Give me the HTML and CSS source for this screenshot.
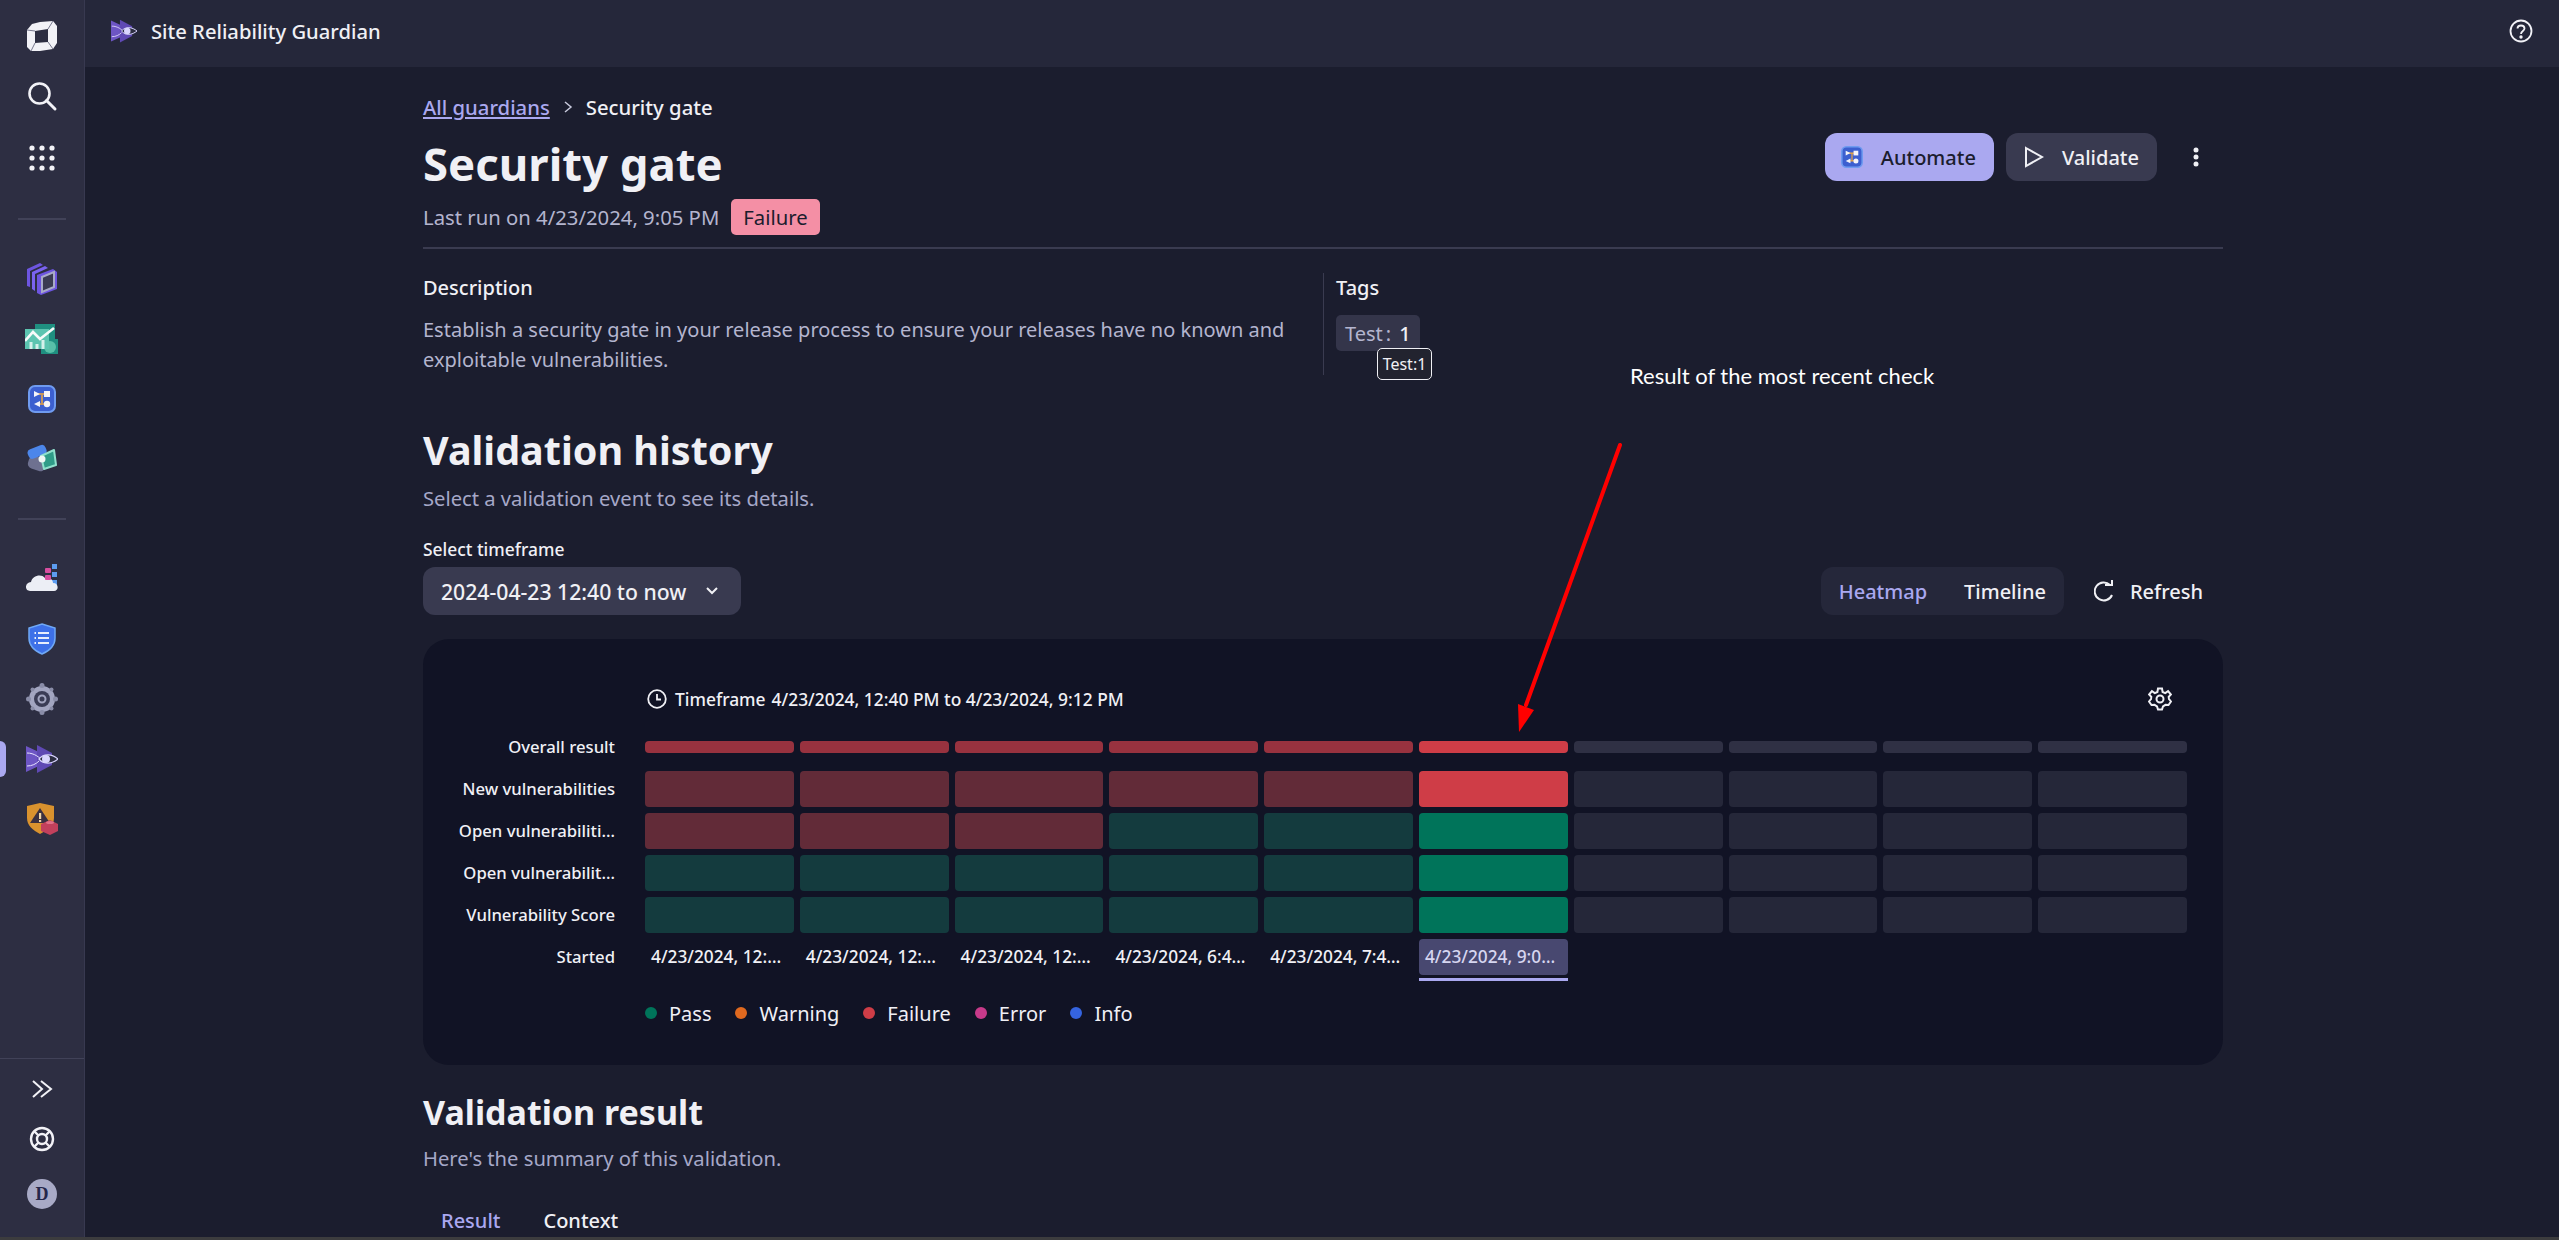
FILE: index.html
```html
<!DOCTYPE html>
<html lang="en">
<head>
    <meta charset="UTF-8">
    <title>Site Reliability Guardian</title>
    <link rel="stylesheet" href="styles.css">
</head>
<body>
    <svg class="defs" width="0" height="0">
        <symbol id="guardian" viewBox="0 0 32 28">
            <polygon points="0,1 15,8 15,20 0,27" fill="#6d55c4"/>
            <polygon points="11,0 26,8 26,20 11,28" fill="#5f49b4"/>
            <path d="M1 8C8 8 14 12 18 18M1 21C6 21 10 19 13 16" fill="none" stroke="#e6e2ff" stroke-width="1"/>
            <path d="M13 14C18 8 26 9 32 14C26 19 18 20 13 14Z" fill="#2d2e42" stroke="#d9d5ff" stroke-width="1.2"/>
            <circle cx="20" cy="14" r="4" fill="#d9d5ff"/>
        </symbol>
        <symbol id="automate" viewBox="0 0 28 28">
            <rect x="1" y="1" width="26" height="26" rx="6" fill="#3c5fd0" stroke="#6f9bf0" stroke-width="2"/>
            <path d="M9 9H18M14 10V18M11 19H18" stroke="#f0a63a" stroke-width="1.5" fill="none"/>
            <polygon points="6,6 12,9 6,12" fill="#f4f4fa"/>
            <rect x="16" y="6" width="6" height="6" fill="#f4f4fa"/>
            <polygon points="12,16 6,19 12,22" fill="#f4f4fa"/>
            <circle cx="19" cy="19" r="3.2" fill="#f4f4fa"/>
        </symbol>
    </svg>

    <div class="app">
        <nav class="sidebar">
            <div class="side-group top">
                <a class="side-item">
                    <svg width="32" height="32" viewBox="0 0 32 32"><path d="M6 4 14 2 27 1 31 6 31 23 27 29 14 31 5 31 1 27 1 10Z" fill="#f2f2f7"/><path d="M9 11 22 9 22 22 9 23Z" fill="#2d2e42"/><path d="M22 9 27 1M22 22 27 29M9 23 5 31M9 11 1 10" stroke="#77788e" stroke-width="1"/></svg>
                </a>
                <a class="side-item">
                    <svg width="32" height="32" viewBox="0 0 32 32"><circle cx="13.5" cy="13.5" r="10" fill="none" stroke="#f2f2f7" stroke-width="2.6"/><path d="M20.5 20.5 29 29" stroke="#f2f2f7" stroke-width="3" stroke-linecap="round"/></svg>
                </a>
                <a class="side-item apps">
                    <svg width="32" height="32" viewBox="0 0 32 32" fill="#f2f2f7"><circle cx="6" cy="6" r="2.6"/><circle cx="16" cy="6" r="2.6"/><circle cx="26" cy="6" r="2.6"/><circle cx="6" cy="16" r="2.6"/><circle cx="16" cy="16" r="2.6"/><circle cx="26" cy="16" r="2.6"/><circle cx="6" cy="26" r="2.6"/><circle cx="16" cy="26" r="2.6"/><circle cx="26" cy="26" r="2.6"/></svg>
                </a>
            </div>
            <div class="side-rule"></div>
            <div class="side-group">
                <a class="side-item">
                    <svg width="32" height="34" viewBox="0 0 32 34"><path d="M1 7 14 1 17 3 4 9 4 25 1 24Z" fill="#6d55e0"/><path d="M6 10 19 4 22 6 9 12 9 29 6 27Z" fill="#7a63f0"/><path d="M11 13 27 7 31 10 31 27 15 33 11 31Z" fill="#6d55e0"/><path d="M16 15 28 10 28 25 16 30Z" fill="#3a3b52" stroke="#a8aac8" stroke-width="2"/></svg>
                </a>
                <a class="side-item">
                    <svg width="34" height="32" viewBox="0 0 34 32"><rect x="10" y="1" width="20" height="16" fill="#1f8f80"/><rect x="16" y="16" width="17" height="15" fill="#1f8f80"/><circle cx="25" cy="24" r="6" fill="#58c0a8"/><rect x="0" y="6" width="24" height="20" fill="#5cc4b0"/><path d="M0 18 8 9 15 16 29 5" fill="none" stroke="#f7fbfa" stroke-width="2.6"/><path d="M6 19V26M12 21V26M18 17V26" stroke="#d4f0ea" stroke-width="3"/></svg>
                </a>
                <a class="side-item">
                    <svg width="28" height="28"><use href="#automate"/></svg>
                </a>
                <a class="side-item">
                    <svg width="30" height="30" viewBox="0 0 30 30"><rect x="1" y="13" width="18" height="13" rx="5" fill="#6e7190" transform="rotate(18 10 20)"/><rect x="1" y="3" width="19" height="10" rx="4" fill="#4c86ea" transform="rotate(-22 10 9)"/><path d="M14 12 27 6 29 21 17 25Z" fill="#2f9c88" stroke="#8fe0cc" stroke-width="2" stroke-linejoin="round"/><circle cx="15" cy="15" r="3.5" fill="#eef6f4"/></svg>
                </a>
            </div>
            <div class="side-rule"></div>
            <div class="side-group">
                <a class="side-item">
                    <svg width="32" height="30" viewBox="0 0 32 30"><rect x="26" y="0" width="5" height="5" fill="#5c9cf0"/><rect x="26" y="8" width="5" height="5" fill="#5c9cf0"/><rect x="26" y="16" width="5" height="5" fill="#5c9cf0"/><path d="M4 27C-2 27-1 18 5 18 6 12 15 9 19 14 24 13 27 16 27 19 33 19 33 27 28 27Z" fill="#eceef5"/><rect x="19" y="4" width="6" height="5" rx="1" fill="#d84ea0"/><rect x="19" y="11" width="6" height="5" rx="1" fill="#d84ea0"/></svg>
                </a>
                <a class="side-item">
                    <svg width="28" height="32" viewBox="0 0 28 32"><path d="M14 1 27 5V15C27 23 21 28 14 31 7 28 1 23 1 15V5Z" fill="#3d70e8" stroke="#6fa8f5" stroke-width="1.5"/><path d="M10 10H21M10 15H21M10 20H21" stroke="#e8eefc" stroke-width="2"/><path d="M6.5 10H8M6.5 15H8M6.5 20H8" stroke="#e8eefc" stroke-width="2"/></svg>
                </a>
                <a class="side-item">
                    <svg width="32" height="32" viewBox="0 0 32 32"><circle cx="16" cy="16" r="13" fill="#a2a5c0"/><circle cx="16" cy="16" r="8" fill="#3a3c55"/><circle cx="16" cy="16" r="3.5" fill="none" stroke="#a2a5c0" stroke-width="2"/><g fill="#8a8da8"><circle cx="16" cy="2.5" r="2.5"/><circle cx="16" cy="29.5" r="2.5"/><circle cx="2.5" cy="16" r="2.5"/><circle cx="29.5" cy="16" r="2.5"/><circle cx="6.5" cy="6.5" r="2"/><circle cx="25.5" cy="6.5" r="2"/><circle cx="6.5" cy="25.5" r="2"/><circle cx="25.5" cy="25.5" r="2"/></g></svg>
                </a>
                <a class="side-item active">
                    <svg width="32" height="28"><use href="#guardian"/></svg>
                </a>
                <a class="side-item">
                    <svg width="32" height="32" viewBox="0 0 32 32"><path d="M1 3 14 0 28 3V15C28 23 21 27 14 31 7 27 1 23 1 15Z" fill="#d9922e"/><polygon points="14,5 24,20 4,20" fill="#3a3040"/><rect x="13" y="10" width="2.2" height="6" fill="#f0d8a8"/><rect x="13" y="17" width="2.2" height="2" fill="#f0d8a8"/><path d="M15 21 24 17 32 21V28L24 32 15 28Z" fill="#c2405c"/><ellipse cx="24" cy="19.500" rx="4" ry="1.600" fill="#e07088"/></svg>
                </a>
            </div>
            <div class="side-bottom">
                <a class="side-item small">
                    <svg width="24" height="24" viewBox="0 0 24 24" fill="none" stroke="#f2f2f7" stroke-width="2"><path d="M3 4 12 12 3 20M11 4 21 12 11 20"/></svg>
                </a>
                <a class="side-item small">
                    <svg width="26" height="26" viewBox="0 0 26 26" fill="none" stroke="#f2f2f7" stroke-width="2.4"><circle cx="13" cy="13" r="11"/><circle cx="13" cy="13" r="5"/><path d="M5 5 9.5 9.5M21 5 16.500 9.500M5 21 9.500 16.500M21 21 16.500 16.500"/></svg>
                </a>
                <div class="avatar">D</div>
            </div>
        </nav>

        <div class="main">
            <header class="topbar">
                <svg width="26" height="24"><use href="#guardian"/></svg>
                <span class="app-name">Site Reliability Guardian</span>
                <svg class="help" width="24" height="24" viewBox="0 0 24 24" fill="none" stroke="#f2f2f7" stroke-width="1.8"><circle cx="12" cy="12" r="10.500"/><path d="M8.500 9.500C8.500 5.500 15.500 5.500 15.500 9.500 15.500 12 12 12 12 15"/><circle cx="12" cy="18" r="0.800" fill="#f2f2f7"/></svg>
            </header>

            <main class="content">
                <div class="breadcrumb">
                    <a class="link">All guardians</a>
                    <svg width="10" height="14" viewBox="0 0 10 14" fill="none" stroke="#c8c9dc" stroke-width="1.500"><path d="M2 2 8 7 2 12"/></svg>
                    <span>Security gate</span>
                </div>

                <div class="page-head">
                    <h1>Security gate</h1>
                    <div class="actions">
                        <button class="btn primary"><svg width="22" height="22"><use href="#automate"/></svg>Automate</button>
                        <button class="btn"><svg width="20" height="22" viewBox="0 0 20 22" fill="none" stroke="#f0f0f5" stroke-width="2"><path d="M2 2 18 11 2 20Z"/></svg>Validate</button>
                        <svg class="kebab" width="6" height="20" viewBox="0 0 6 20" fill="#f0f0f5"><circle cx="3" cy="3" r="2.500"/><circle cx="3" cy="10" r="2.500"/><circle cx="3" cy="17" r="2.500"/></svg>
                    </div>
                </div>

                <div class="last-run">
                    <span>Last run on 4/23/2024, 9:05 PM</span>
                    <span class="badge">Failure</span>
                </div>

                <section class="meta">
                    <div class="meta-desc">
                        <h3>Description</h3>
                        <p>Establish a security gate in your release process to ensure your releases have no known and exploitable vulnerabilities.</p>
                    </div>
                    <div class="meta-tags">
                        <h3>Tags</h3>
                        <div class="chip">Test<i>:</i><b>1</b><span class="tooltip">Test:1</span></div>
                    </div>
                </section>

                <h2 class="history-title">Validation history</h2>
                <p class="muted history-sub">Select a validation event to see its details.</p>
                <label class="tf-label">Select timeframe</label>

                <div class="toolbar">
                    <button class="select">2024-04-23 12:40 to now
                        <svg width="14" height="10" viewBox="0 0 14 10" fill="none" stroke="#f0f0f5" stroke-width="2"><path d="M2 2 7 7 12 2"/></svg>
                    </button>
                    <div class="view-controls">
                        <div class="segment">
                            <span class="seg on">Heatmap</span>
                            <span class="seg">Timeline</span>
                        </div>
                        <button class="refresh">
                            <svg width="20" height="22" viewBox="0 0 20 22" fill="none" stroke="#f0f0f5" stroke-width="2"><path d="M16 5A9 9 0 1 0 18 15"/><path d="M11 5H18V0"/></svg>
                            Refresh
                        </button>
                    </div>
                </div>

                <section class="panel">
                    <div class="panel-head">
                        <div class="timeframe">
                            <svg width="20" height="20" viewBox="0 0 20 20" fill="none" stroke="#f0f0f5" stroke-width="1.800"><circle cx="10" cy="10" r="8.800"/><path d="M10 5V10.500H14"/></svg>
                            <span>Timeframe</span>
                            <span>4/23/2024, 12:40 PM to 4/23/2024, 9:12 PM</span>
                        </div>
                        <svg class="gear" width="24" height="24" viewBox="0 0 24 24" fill="none" stroke="#f0f0f5" stroke-width="2"><path d="M10 1.500H14L14.600 5 17.200 6.100 20.100 4.100 22.900 7.500 20.700 9.800 21 12 23 14.500 20.500 18 17.500 17.800 15 19.500 14 22.500H10L9 19.500 6.500 17.800 3.500 18 1 14.500 3 12 3.300 9.800 1.100 7.500 3.900 4.100 6.800 6.100 9.400 5Z"/><circle cx="12" cy="12" r="3.500"/></svg>
                    </div>

                    <div class="heat-row overall">
                        <div class="row-label">Overall result</div>
                        <div class="cell fail-mid"></div><div class="cell fail-mid"></div><div class="cell fail-mid"></div><div class="cell fail-mid"></div><div class="cell fail-mid"></div>
                        <div class="cell fail-on"></div>
                        <div class="cell empty-mid"></div><div class="cell empty-mid"></div><div class="cell empty-mid"></div><div class="cell empty-mid"></div>
                    </div>
                    <div class="heat-row">
                        <div class="row-label">New vulnerabilities</div>
                        <div class="cell fail"></div><div class="cell fail"></div><div class="cell fail"></div><div class="cell fail"></div><div class="cell fail"></div>
                        <div class="cell fail-on"></div>
                        <div class="cell empty"></div><div class="cell empty"></div><div class="cell empty"></div><div class="cell empty"></div>
                    </div>
                    <div class="heat-row">
                        <div class="row-label">Open vulnerabiliti…</div>
                        <div class="cell fail"></div><div class="cell fail"></div><div class="cell fail"></div><div class="cell pass"></div><div class="cell pass"></div>
                        <div class="cell pass-on"></div>
                        <div class="cell empty"></div><div class="cell empty"></div><div class="cell empty"></div><div class="cell empty"></div>
                    </div>
                    <div class="heat-row">
                        <div class="row-label">Open vulnerabilit…</div>
                        <div class="cell pass"></div><div class="cell pass"></div><div class="cell pass"></div><div class="cell pass"></div><div class="cell pass"></div>
                        <div class="cell pass-on"></div>
                        <div class="cell empty"></div><div class="cell empty"></div><div class="cell empty"></div><div class="cell empty"></div>
                    </div>
                    <div class="heat-row">
                        <div class="row-label">Vulnerability Score</div>
                        <div class="cell pass"></div><div class="cell pass"></div><div class="cell pass"></div><div class="cell pass"></div><div class="cell pass"></div>
                        <div class="cell pass-on"></div>
                        <div class="cell empty"></div><div class="cell empty"></div><div class="cell empty"></div><div class="cell empty"></div>
                    </div>
                    <div class="heat-row started">
                        <div class="row-label">Started</div>
                        <div class="cell stamp">4/23/2024, 12:…</div>
                        <div class="cell stamp">4/23/2024, 12:…</div>
                        <div class="cell stamp">4/23/2024, 12:…</div>
                        <div class="cell stamp">4/23/2024, 6:4…</div>
                        <div class="cell stamp">4/23/2024, 7:4…</div>
                        <div class="cell stamp selected">4/23/2024, 9:0…</div>
                    </div>

                    <div class="legend">
                        <span class="legend-item"><i class="dot d-pass"></i>Pass</span>
                        <span class="legend-item"><i class="dot d-warn"></i>Warning</span>
                        <span class="legend-item"><i class="dot d-fail"></i>Failure</span>
                        <span class="legend-item"><i class="dot d-error"></i>Error</span>
                        <span class="legend-item"><i class="dot d-info"></i>Info</span>
                    </div>
                </section>

                <h2 class="result-title">Validation result</h2>
                <p class="muted result-sub">Here's the summary of this validation.</p>
                <div class="tabs">
                    <span class="tab on">Result</span>
                    <span class="tab">Context</span>
                </div>
            </main>
        </div>
    </div>
    <div class="strip"></div>

    <!-- annotation drawn on top of the screenshot -->
    <div class="note">Result of the most recent check</div>
    <svg class="note-arrow" width="120" height="300" viewBox="0 0 120 300">
        <path d="M108 5 14 265" stroke="#ff0000" stroke-width="4" stroke-linecap="round" fill="none"/>
        <polygon points="7,292 6,264 22,270" fill="#ff0000"/>
    </svg>
</body>
</html>
```

FILE: styles.css
```css
* {
    box-sizing: border-box;
}
html, body {
    margin: 0;
    padding: 0;
    height: 1240px;
    overflow: hidden;
}
body {
    position: relative;
    background-color: #1b1d2e;
    color: #f0f0f5;
    font-family: "Noto Sans", sans-serif;
    font-size: 20px;
}
h1, h2, h3, p {
    margin: 0;
}
button {
    font-family: inherit;
    border: none;
    cursor: pointer;
}
.defs {
    position: absolute;
}
.app {
    display: flex;
    height: 1237px;
}
.strip {
    height: 3px;
    background-color: #3c3c3e;
}

/* left nav */
.sidebar {
    width: 85px;
    flex-shrink: 0;
    display: flex;
    flex-direction: column;
    padding-top: 6px;
    background-color: #2d2e42;
    border-right: 1px solid #383950;
}
.side-group {
    display: flex;
    flex-direction: column;
}
.side-group.top {
    margin-bottom: 1px;
}
.side-item {
    position: relative;
    height: 60px;
    display: flex;
    justify-content: center;
    align-items: center;
}
.side-item.apps {
    margin-top: 2px;
}
.side-item.active::before {
    content: "";
    position: absolute;
    left: 0;
    top: 12px;
    width: 6px;
    height: 36px;
    border-radius: 0 6px 6px 0;
    background-color: #aaa8f0;
}
.side-rule {
    height: 2px;
    margin: 29px 18px;
    background-color: #414258;
}
.side-bottom {
    margin-top: auto;
    padding-top: 5px;
    padding-bottom: 28px;
    border-top: 1px solid #414258;
    display: flex;
    flex-direction: column;
    align-items: center;
}
.side-item.small {
    height: 50px;
    width: 100%;
}
.avatar {
    width: 30px;
    height: 30px;
    margin-top: 15px;
    border-radius: 50%;
    background-color: #a8aac6;
    color: #25274a;
    font-family: "Liberation Serif", serif;
    font-weight: 700;
    font-size: 18px;
    line-height: 30px;
    text-align: center;
}

/* top bar */
.main {
    flex: 1;
    min-width: 0;
}
.topbar {
    height: 67px;
    display: flex;
    align-items: center;
    padding: 0 26px 5px 26px;
    background-color: #25273a;
}
.app-name {
    margin-left: 14px;
    font-size: 20.200px;
    font-weight: 500;
}
.help {
    margin-left: auto;
}

/* page */
.content {
    position: relative;
    width: 1800px;
    margin-left: 338px;
    padding-top: 26px;
}
.breadcrumb {
    display: flex;
    align-items: center;
    gap: 13px;
    height: 28px;
    font-size: 20.300px;
    font-weight: 500;
}
.link {
    color: #aaa8f0;
    text-decoration: underline;
}
.page-head {
    display: flex;
    justify-content: space-between;
    align-items: flex-start;
    margin-top: 12px;
}
h1 {
    font-size: 45.500px;
    line-height: 60px;
    font-weight: 700;
}
.actions {
    display: flex;
    align-items: center;
    gap: 12px;
    margin-right: 24px;
}
.btn {
    display: flex;
    align-items: center;
    gap: 18px;
    height: 48px;
    padding: 0 18px;
    border-radius: 12px;
    background-color: #393a50;
    color: #f0f0f5;
    font-size: 20px;
    font-weight: 500;
}
.btn.primary {
    background-color: #aaa8f0;
    color: #1b1d2e;
    padding: 0 18px 0 16px;
}
.kebab {
    margin-left: 24px;
}
.last-run {
    display: flex;
    align-items: center;
    gap: 12px;
    height: 36px;
    margin-top: 6px;
    font-size: 20.300px;
    color: #b4b5cf;
}
.badge {
    padding: 0 12px;
    line-height: 36px;
    border-radius: 5px;
    background-color: #f48fa5;
    color: #1b1d2e;
}
.meta {
    display: flex;
    margin-top: 12px;
    padding-top: 24px;
    border-top: 2px solid #3a3b50;
}
.meta h3 {
    font-size: 20px;
    font-weight: 500;
    line-height: 30px;
}
.meta-desc {
    width: 900px;
}
.meta-desc p {
    width: 880px;
    margin-top: 12px;
    line-height: 30px;
    color: #b4b5cf;
}
.meta-tags {
    height: 102px;
    padding-left: 12px;
    border-left: 1px solid #3a3b50;
}
.chip {
    position: relative;
    display: inline-flex;
    align-items: center;
    height: 36px;
    width: 84px;
    margin-top: 12px;
    padding: 0 9px;
    border-radius: 5px;
    background-color: #34354a;
    color: #b4b5cf;
}
.chip i {
    font-style: normal;
    margin: 0 8px 0 3px;
}
.chip b {
    color: #f0f0f5;
    font-weight: 500;
}
.tooltip {
    position: absolute;
    left: 41px;
    top: 33px;
    width: 55px;
    height: 32px;
    border: 1px solid #f0f0f5;
    border-radius: 5px;
    background-color: #22232f;
    color: #f0f0f5;
    font-size: 16px;
    line-height: 30px;
    text-align: center;
}
h2 {
    font-weight: 700;
}
.history-title {
    margin-top: 50px;
    font-size: 39.500px;
    line-height: 50px;
}
.muted {
    color: #a6a8c8;
    line-height: 30px;
    font-size: 20.200px;
}
.history-sub {
    margin-top: 8px;
}
.tf-label {
    display: block;
    margin-top: 24px;
    font-size: 17.400px;
    font-weight: 500;
    line-height: 24px;
}
.toolbar {
    display: flex;
    justify-content: space-between;
    margin-top: 6px;
}
.select {
    display: flex;
    align-items: center;
    gap: 19px;
    height: 48px;
    width: 318px;
    padding: 0 18px;
    border-radius: 12px;
    background-color: #393a50;
    color: #f0f0f5;
    font-size: 21.200px;
    font-weight: 500;
}
.view-controls {
    display: flex;
    align-items: center;
    gap: 12px;
    margin-right: 8px;
}
.segment {
    display: flex;
    gap: 37px;
    height: 48px;
    align-items: center;
    padding: 0 18px;
    border-radius: 12px;
    background-color: #25273a;
    font-weight: 500;
}
.seg.on {
    color: #aaa8f0;
}
.refresh {
    display: flex;
    align-items: center;
    gap: 16px;
    height: 48px;
    padding: 0 12px 0 18px;
    background: none;
    color: #f0f0f5;
    font-size: 20px;
    font-weight: 500;
}

/* heatmap panel */
.panel {
    height: 426px;
    margin-top: 24px;
    padding: 40px 36px 0 0;
    border-radius: 26px;
    background-color: #111325;
}
.panel-head {
    display: flex;
    justify-content: space-between;
    align-items: center;
    height: 40px;
    margin-bottom: 22px;
    padding-left: 224px;
}
.timeframe {
    display: flex;
    align-items: center;
    gap: 6px;
    font-size: 17.400px;
    font-weight: 500;
}
.timeframe svg {
    margin-right: 2px;
}
.gear {
    margin-right: 15px;
}
.heat-row {
    display: flex;
    gap: 6px;
    height: 36px;
    margin-bottom: 6px;
}
.heat-row.overall {
    height: 12px;
    margin-bottom: 18px;
}
.row-label {
    width: 192px;
    margin-right: 24px;
    flex-shrink: 0;
    align-self: center;
    text-align: right;
    font-size: 16.700px;
    font-weight: 500;
    line-height: 24px;
    white-space: nowrap;
}
.cell {
    flex: 0 0 148.800px;
    border-radius: 4px;
}
.fail { background-color: #622b38; }
.fail-mid { background-color: #98323f; }
.fail-on { background-color: #cf3d47; }
.pass { background-color: #143b3e; }
.pass-on { background-color: #00745a; }
.empty { background-color: #252739; }
.empty-mid { background-color: #2f3044; }
.stamp {
    padding-left: 6px;
    font-size: 17.300px;
    line-height: 36px;
    font-weight: 500;
    white-space: nowrap;
    overflow: hidden;
}
.stamp.selected {
    position: relative;
    overflow: visible;
    background-color: #484870;
    color: #d6d6f0;
}
.stamp.selected::after {
    content: "";
    position: absolute;
    left: 0;
    right: 0;
    top: 39px;
    height: 3px;
    background-color: #aaa8f0;
}
.legend {
    display: flex;
    align-items: center;
    gap: 24px;
    height: 30px;
    margin-top: 23px;
    padding-left: 222px;
}
.legend-item {
    display: flex;
    align-items: center;
    gap: 12px;
}
.dot {
    width: 12px;
    height: 12px;
    border-radius: 50%;
}
.d-pass { background-color: #00745a; }
.d-warn { background-color: #e0691f; }
.d-fail { background-color: #cf3d47; }
.d-error { background-color: #c83a8a; }
.d-info { background-color: #3564e0; }

.result-title {
    margin-top: 25px;
    font-size: 34px;
    line-height: 44px;
}
.result-sub {
    margin-top: 9px;
}
.tabs {
    display: flex;
    gap: 7px;
    margin-top: 33px;
    font-weight: 500;
    line-height: 30px;
}
.tab {
    padding: 0 18px;
}
.tab.on {
    color: #aaa8f0;
}

/* annotation overlay */
.note {
    position: absolute;
    left: 1630px;
    top: 362px;
    font-family: "Lato", sans-serif;
    font-size: 22px;
    line-height: 28px;
    color: #ffffff;
    white-space: nowrap;
}
.note-arrow {
    position: absolute;
    left: 1512px;
    top: 440px;
}
```
